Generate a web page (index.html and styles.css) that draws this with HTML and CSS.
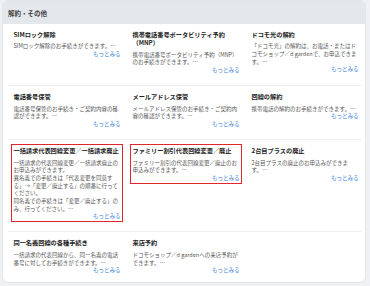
FILE: index.html
```html
<!DOCTYPE html>
<html lang="ja">
<head>
<meta charset="utf-8">
<title>解約・その他</title>
<link rel="stylesheet" href="styles.css">
</head>
<body>
<section class="card">
  <header class="card-head">解約・その他</header>

  <div class="row">
    <div class="item">
      <h3 class="title">SIMロック解除</h3>
      <p class="desc">SIMロック解除のお手続きができます。…</p>
      <a class="more" href="#">もっとみる</a>
    </div>
    <div class="item">
      <h3 class="title">携帯電話番号ポータビリティ予約（MNP）</h3>
      <p class="desc">携帯電話番号ポータビリティ予約（MNP）のお手続きができます。…</p>
      <a class="more" href="#">もっとみる</a>
    </div>
    <div class="item">
      <h3 class="title">ドコモ光の解約</h3>
      <p class="desc">「ドコモ光」の解約は、お電話・またはドコモショップ／d gardenで、お申込できます。…</p>
      <a class="more" href="#">もっとみる</a>
    </div>
  </div>

  <div class="row">
    <div class="item">
      <h3 class="title">電話番号保管</h3>
      <p class="desc">電話番号保管のお手続き・ご契約内容の確認ができます。…</p>
      <a class="more" href="#">もっとみる</a>
    </div>
    <div class="item">
      <h3 class="title">メールアドレス保管</h3>
      <p class="desc">メールアドレス保管のお手続き・ご契約内容の確認ができます。…</p>
      <a class="more" href="#">もっとみる</a>
    </div>
    <div class="item">
      <h3 class="title">回線の解約</h3>
      <p class="desc">携帯電話の解約のお手続きができます。…</p>
      <a class="more" href="#">もっとみる</a>
    </div>
  </div>

  <div class="row">
    <div class="item hl">
      <h3 class="title">一括請求代表回線変更／一括請求廃止</h3>
      <p class="desc">一括請求の代表回線変更／一括請求廃止のお申込みができます。<br>異名義での手続きは「代表変更を同意する」→「変更／廃止する」の順番に行ってください。<br>同名義での手続きは「変更／廃止する」のみ、行ってください。…</p>
      <a class="more" href="#">もっとみる</a>
    </div>
    <div class="item hl">
      <h3 class="title">ファミリー割引代表回線変更／廃止</h3>
      <p class="desc">ファミリー割引の代表回線変更／廃止のお申込みができます。…</p>
      <a class="more" href="#">もっとみる</a>
    </div>
    <div class="item">
      <h3 class="title">2台目プラスの廃止</h3>
      <p class="desc">2台目プラスの廃止のお申込みができます。…</p>
      <a class="more" href="#">もっとみる</a>
    </div>
  </div>

  <div class="row">
    <div class="item">
      <h3 class="title">同一名義回線の各種手続き</h3>
      <p class="desc">一括請求の代表回線から、同一名義の電話番号に対してお手続きができます。…</p>
      <a class="more" href="#">もっとみる</a>
    </div>
    <div class="item">
      <h3 class="title">来店予約</h3>
      <p class="desc">ドコモショップ／d gardenへの来店予約ができます。…</p>
      <a class="more" href="#">もっとみる</a>
    </div>
  </div>
</section>
</body>
</html>
```

FILE: styles.css
```css
html, body {
  margin: 0;
  padding: 0;
}

body {
  width: 370px;
  height: 286px;
  overflow: hidden;
  box-sizing: border-box;
  padding: 1px 5px 3px 3px;
  background: #eff1f4;
  font-family: "Noto Sans CJK JP", "Noto Sans", sans-serif;
}

.card {
  height: 281px;
  background: #ffffff;
  border-radius: 5px;
  box-shadow: 0 0 0 1px #e2e5ea;
  overflow: hidden;
}

.card-head {
  height: 23px;
  display: flex;
  align-items: center;
  padding-left: 5px;
  background: #e4e7ec;
  font-size: 6.5px;
  font-weight: 700;
  color: #444;
}

.row {
  display: grid;
  grid-template-columns: repeat(3, 112px);
  column-gap: 7px;
  align-items: start;
  margin: 0 4px 0 5px;
  padding: 4px 0 9px 3px;
  border-bottom: 1px solid #eceef1;
}

.row:first-of-type {
  padding-top: 3.5px;
}

.row:last-child {
  border-bottom: none;
}

.item {
  display: flex;
  flex-direction: column;
  border: 1.5px solid transparent;
  padding: 2px 1.5px 0;
}

.item.hl {
  border-color: #e0252d;
}

.title {
  display: block;
  margin: 0 0 4.5px;
  font-size: 6.2px;
  line-height: 1.35;
  font-weight: 700;
  color: #222;
}

.desc {
  display: block;
  margin: 0;
  font-size: 5.5px;
  line-height: 1.4;
  color: #555;
}

.more {
  display: block;
  align-self: flex-end;
  font-size: 5.5px;
  line-height: 1.4;
  color: #3b82dc;
  text-decoration: none;
}
```
